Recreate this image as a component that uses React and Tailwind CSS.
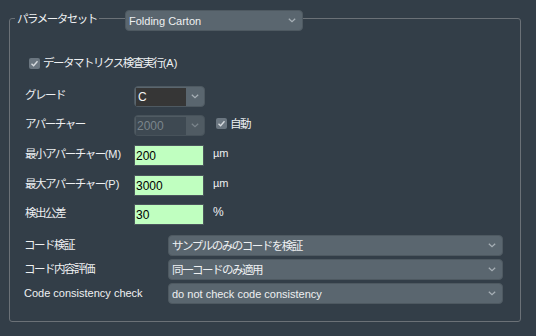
const font = { fontFamily: '"Liberation Sans", "Noto Sans CJK JP", sans-serif' };

const Chevron = ({ dim }) => (
  <svg width="8" height="5" viewBox="0 0 8 5" className={`block ${dim ? "opacity-50" : ""}`}>
    <path d="M0.8 0.8 L4 3.8 L7.2 0.8" fill="none" stroke="#a7b0b6" strokeWidth="1.2" />
  </svg>
);

const jp = "text-[11.5px] leading-[16px] tracking-[-1.5px] text-[#eef0f2]";
const en = "text-[11px] leading-[16px] text-[#eef0f2]";

// Japanese runs get tightened spacing, ASCII runs stay normal
const Jp = ({ text, className = "" }) => (
  <span className={`${jp} ${className}`}>
    {text.split(/([\x20-\x7E]+)/).map((part, i) =>
      /^[\x20-\x7E]+$/.test(part) ? (
        <span key={i} className="tracking-normal text-[11px]">
          {part}
        </span>
      ) : (
        part
      )
    )}
  </span>
);

const Check = ({ label }) => (
  <div className="flex items-center gap-[3px]">
    <div className="w-[11px] h-[11px] rounded-[2px] bg-[#6b7680] flex items-center justify-center">
      <svg width="9" height="9" viewBox="0 0 9 9" className="block">
        <path d="M1.5 4.8 L3.6 6.8 L7.5 2.2" fill="none" stroke="#d6dade" strokeWidth="1.4" />
      </svg>
    </div>
    <Jp text={label} />
  </div>
);

const Combo = ({ value, className = "", japanese }) => (
  <div
    className={`h-[21px] rounded-[4px] bg-[#5a666f] border border-[#4e5961] flex items-center justify-between pl-[3px] pr-[6px] ${className}`}
  >
    {japanese ? <Jp text={value} /> : <span className={en}>{value}</span>}
    <Chevron />
  </div>
);

const NumInput = ({ value }) => (
  <div className="w-[70px] h-[21px] bg-[#c0ffc0] border border-[#4b555c] flex items-center pl-[1px] text-[12px] leading-[16px] text-black">
    {value}
  </div>
);

const Row = ({ label, children, className = "" }) => (
  <div className={`flex items-center h-[21px] ${className}`}>
    <Jp text={label} className="w-[109px] -mt-[4px]" />
    {children}
  </div>
);

export default function App() {
  return (
    <div className="w-[536px] h-[336px] bg-[#333e48] overflow-hidden pt-[18px] pl-[9px]" style={font}>
      <div className="w-[512px] h-[304px] border border-[#6b7177] rounded-[3px]">
        <div className="flex items-start h-[21px] -mt-[9px]">
          <div className="w-[115px] flex pt-[1px]">
            <span className={`ml-[5px] px-[2px] bg-[#333e48] ${jp}`}>パラメータセット</span>
          </div>
          <Combo value="Folding Carton" className="w-[178px]" />
        </div>

        <div className="pl-[19px] mt-[25px] h-[14px] flex items-center">
          <Check label="データマトリクス検査実行(A)" />
        </div>

        <div className="pl-[15px]">
          <Row label="グレード" className="mt-[16px]">
            <div className="w-[71px] h-[21px] rounded-[4px] bg-[#5a666f] border border-[#4e5961] flex items-center pl-[1px]">
              <div className="w-[50px] h-[18px] bg-[#363636] text-[12px] leading-[16px] text-[#f2f4f5] pl-[2px] flex items-center">
                C
              </div>
              <div className="flex-1 flex justify-center">
                <Chevron />
              </div>
            </div>
          </Row>
          <Row label="アパーチャー" className="mt-[8px]">
            <div className="w-[71px] h-[21px] rounded-[4px] bg-[#505b63] border border-[#47525a] flex items-center pl-[1px]">
              <div className="w-[50px] h-[18px] bg-[#3e4952] text-[12px] leading-[16px] text-[#7b858c] pl-[1px] flex items-center">
                2000
              </div>
              <div className="flex-1 flex justify-center">
                <Chevron dim />
              </div>
            </div>
            <div className="ml-[11px] -mt-[4px]">
              <Check label="自動" />
            </div>
          </Row>
          <Row label="最小アパーチャー(M)" className="mt-[9px]">
            <NumInput value="200" />
            <span className={`ml-[9px] -mt-[6px] ${en}`}>µm</span>
          </Row>
          <Row label="最大アパーチャー(P)" className="mt-[9px]">
            <NumInput value="3000" />
            <span className={`ml-[9px] -mt-[6px] ${en}`}>µm</span>
          </Row>
          <Row label="検出公差" className="mt-[8px]">
            <NumInput value="30" />
            <span className="ml-[9px] -mt-[6px] text-[12px] leading-[16px] text-[#eef0f2]">%</span>
          </Row>
        </div>

        <div className="pl-[14px] mt-[10px] flex flex-col gap-[3px]">
          {[
            ["コード検証", "サンプルのみのコードを検証", true],
            ["コード内容評価", "同一コードのみ適用", true],
            ["Code consistency check", "do not check code consistency", false],
          ].map(([label, value, japanese]) => (
            <div key={label} className="flex items-center h-[21px]">
              {japanese ? (
                <Jp text={label} className="w-[144px] -mt-[2px]" />
              ) : (
                <span className={`w-[144px] -mt-[2px] ${en}`}>{label}</span>
              )}
              <Combo value={value} japanese={japanese} className="w-[335px]" />
            </div>
          ))}
        </div>
      </div>
    </div>
  );
}
